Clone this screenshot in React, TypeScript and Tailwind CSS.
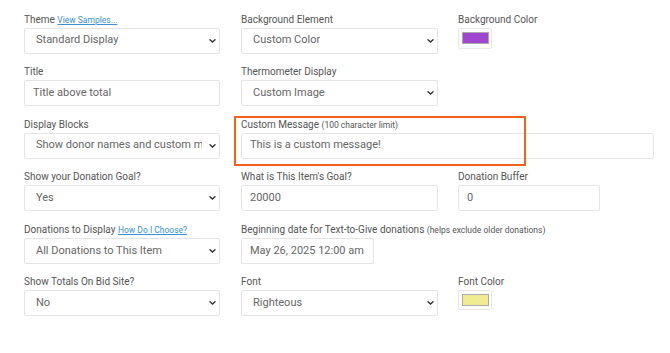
import React from "react";

const font = { fontFamily: "Roboto, 'Noto Sans', sans-serif" };

function Chevron() {
  return (
    <svg width="7" height="5" viewBox="0 0 7 5" className="absolute right-[3px] top-1/2 -translate-y-1/2">
      <path d="M1 1.2 L3.5 3.6 L6 1.2" fill="none" stroke="#333" strokeWidth="1.4" strokeLinecap="round" />
    </svg>
  );
}

function Label({ children }: { children: React.ReactNode }) {
  return (
    <div className="h-[17px] leading-[17px] text-[10px] text-[#555] whitespace-nowrap">{children}</div>
  );
}

function Select({ value, w = "w-[196px]" }: { value: string; w?: string }) {
  return (
    <div className={`relative h-[26px] ${w} border border-[#e4e4e4] rounded-[2px] bg-white flex items-center pl-[11px] pr-[17px] overflow-hidden`}>
      <span className="text-[11px] text-[#666] whitespace-nowrap overflow-hidden">{value}</span>
      <Chevron />
    </div>
  );
}

function Input({ value, w = "w-[196px]" }: { value: string; w?: string }) {
  return (
    <div className={`h-[26px] ${w} border border-[#e4e4e4] rounded-[2px] bg-white flex items-center pl-[8px]`}>
      <span className="text-[11px] text-[#666] whitespace-nowrap">{value}</span>
    </div>
  );
}

function Swatch({ color, h = "h-[21px]" }: { color: string; h?: string }) {
  return (
    <div className={`w-[34px] ${h} border border-[#e8e8e8] rounded-[2px] bg-white flex items-center justify-center`}>
      <div className="w-[27px] h-[12px] border border-[#aaa]" style={{ backgroundColor: color }} />
    </div>
  );
}

function Cell({ children, span = false }: { children: React.ReactNode; span?: boolean }) {
  return <div className={`h-[52.6px] ${span ? "col-span-2" : ""}`}>{children}</div>;
}

export default function App() {
  return (
    <div className="w-[670px] h-[353px] bg-white overflow-hidden" style={font}>
      <div className="pl-[24px] pt-[10.5px] grid grid-cols-[217px_217px_217px]">
        {/* Row 1 */}
        <Cell>
          <Label>
            Theme <span className="text-[8.5px] text-[#3b8fd6] underline">View Samples...</span>
          </Label>
          <Select value="Standard Display" />
        </Cell>
        <Cell>
          <Label>Background Element</Label>
          <Select value="Custom Color" w="w-[197px]" />
        </Cell>
        <Cell>
          <Label>Background Color</Label>
          <Swatch color="#a044d2" />
        </Cell>

        {/* Row 2 */}
        <Cell>
          <Label>Title</Label>
          <Input value="Title above total" />
        </Cell>
        <Cell>
          <Label>Thermometer Display</Label>
          <Select value="Custom Image" w="w-[197px]" />
        </Cell>
        <Cell>
          <div />
        </Cell>

        {/* Row 3 */}
        <Cell>
          <Label>Display Blocks</Label>
          <Select value="Show donor names and custom messages" />
        </Cell>
        <Cell span>
          <div className="relative">
            <Label>
              Custom Message <span className="text-[8.5px] text-[#555]">(100 character limit)</span>
            </Label>
            <Input value="This is a custom message!" w="w-[413px]" />
            <div className="absolute left-[-7px] top-[0px] w-[292px] h-[50px] border-2 border-[#f5601c]" />
          </div>
        </Cell>

        {/* Row 4 */}
        <Cell>
          <Label>Show your Donation Goal?</Label>
          <Select value="Yes" />
        </Cell>
        <Cell>
          <Label>What is This Item's Goal?</Label>
          <Input value="20000" w="w-[197px]" />
        </Cell>
        <Cell>
          <Label>Donation Buffer</Label>
          <Input value="0" w="w-[142px]" />
        </Cell>

        {/* Row 5 */}
        <Cell>
          <Label>
            Donations to Display <span className="text-[8.5px] text-[#3b8fd6] underline">How Do I Choose?</span>
          </Label>
          <Select value="All Donations to This Item" />
        </Cell>
        <Cell span>
          <Label>
            Beginning date for Text-to-Give donations{" "}
            <span className="text-[8.5px] text-[#555]">(helps exclude older donations)</span>
          </Label>
          <Input value="May 26, 2025 12:00 am" w="w-[133px]" />
        </Cell>

        {/* Row 6 */}
        <Cell>
          <Label>Show Totals On Bid Site?</Label>
          <Select value="No" />
        </Cell>
        <Cell>
          <Label>Font</Label>
          <Select value="Righteous" w="w-[197px]" />
        </Cell>
        <Cell>
          <Label>Font Color</Label>
          <Swatch color="#f0ec92" h="h-[20px]" />
        </Cell>
      </div>
    </div>
  );
}
